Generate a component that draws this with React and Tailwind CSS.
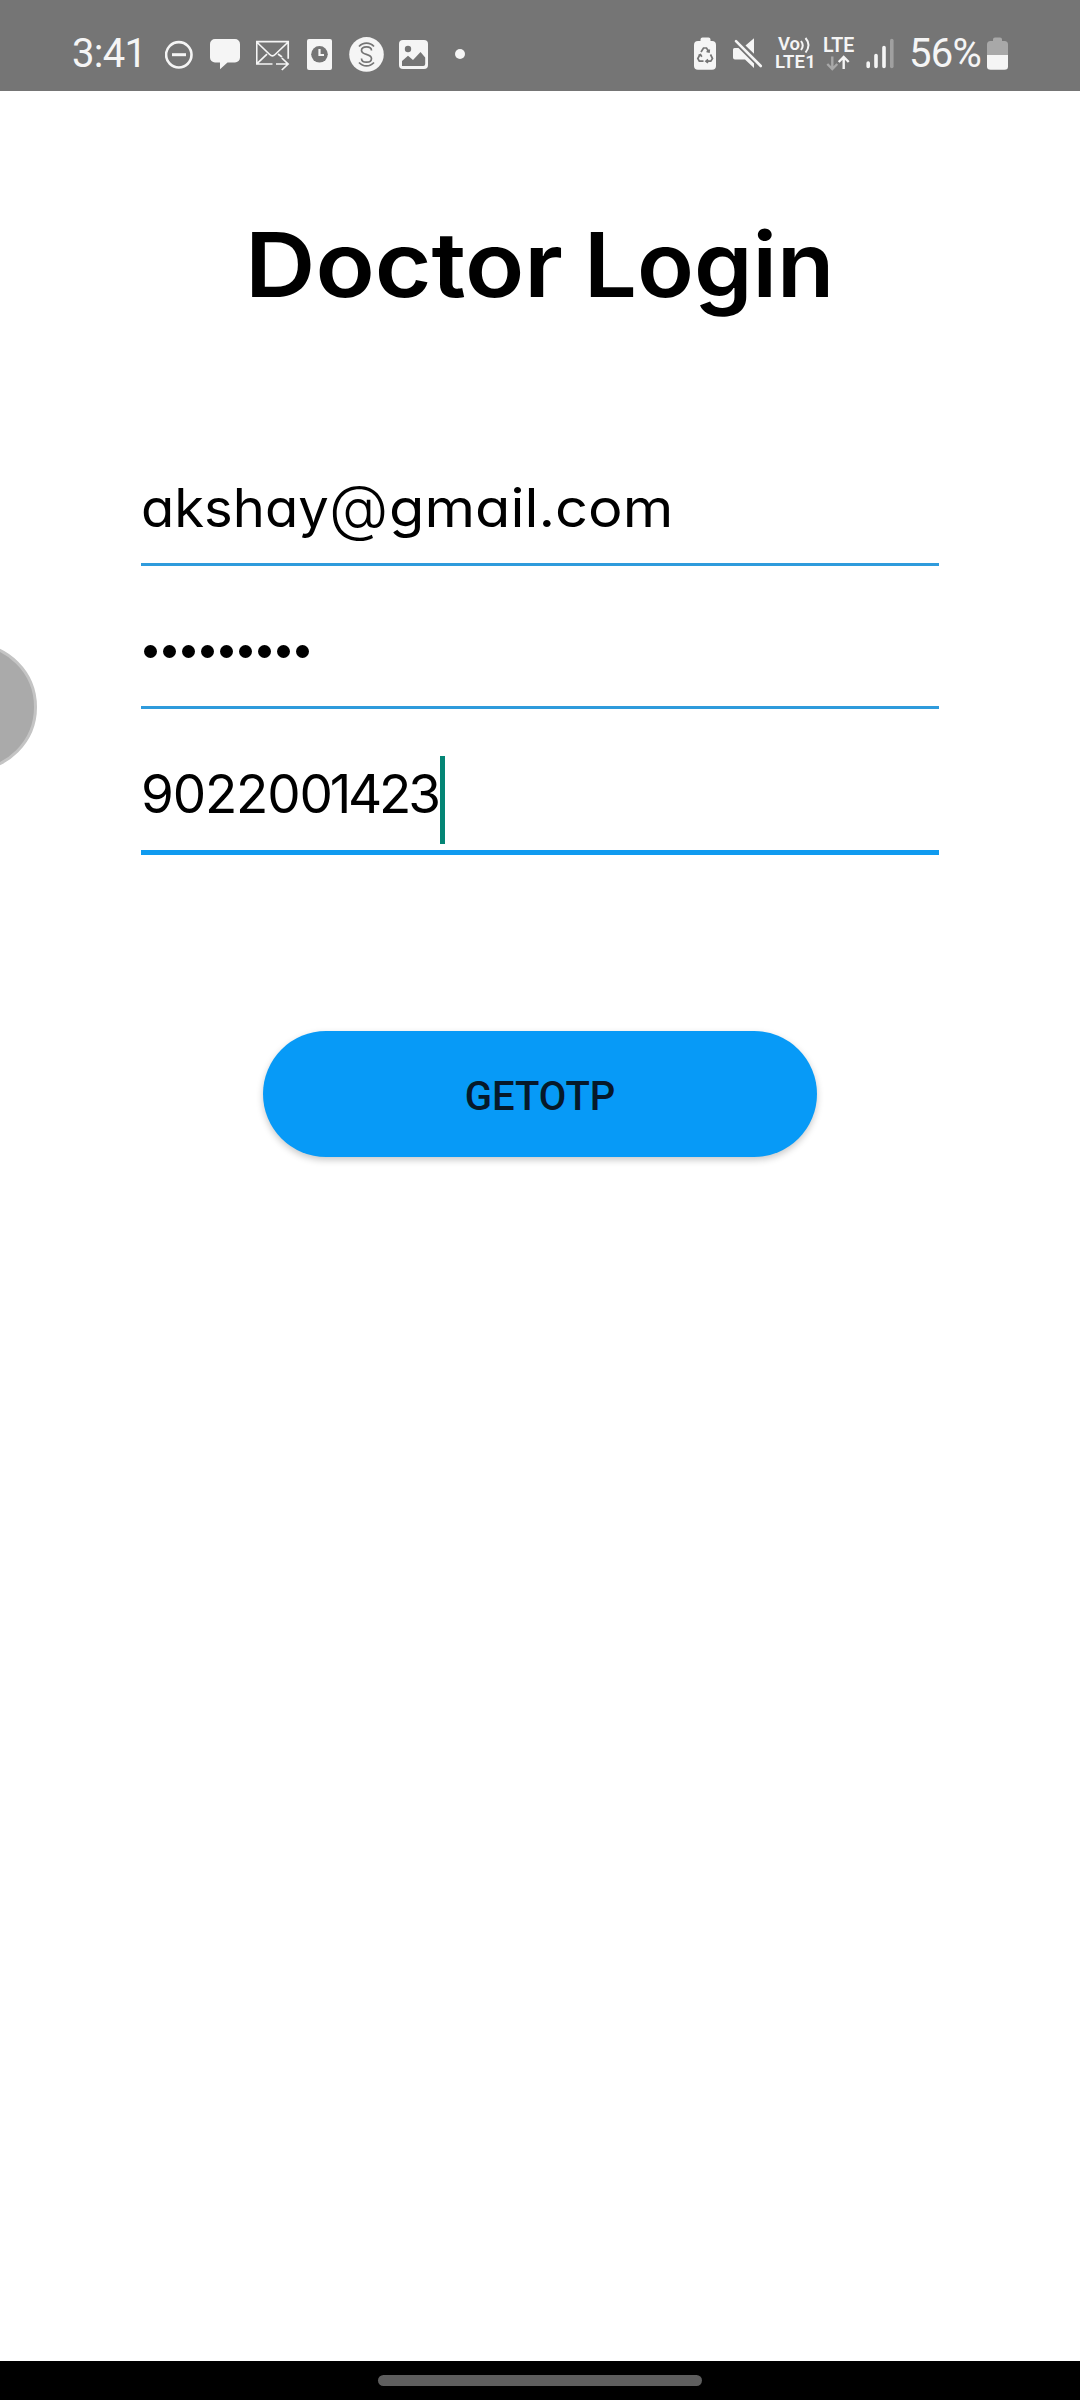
function Icon({ box, className, children }) {
  return (
    <svg viewBox={box} className={`h-9 shrink-0 ${className}`} fill="none" stroke="none">
      {children}
    </svg>
  );
}

function StatusBar() {
  return (
    <header className="flex h-[91px] shrink-0 items-start bg-[#757575] pt-9 font-['Roboto',sans-serif] text-[#f5f5f5]">
      <span className="ml-[72px] w-[93px] text-[40px] leading-9 whitespace-nowrap tracking-[-0.7px]">3:41</span>
      <Icon box="165 36 28 36" className="w-7">
        <circle cx="178.8" cy="54.8" r="12.7" stroke="#f5f5f5" strokeWidth="2.6" />
        <path d="M172 54.7h14" stroke="#f5f5f5" strokeWidth="3" />
      </Icon>
      <Icon box="210 36 30 36" className="ml-[17px] w-[30px]">
        <path d="M215 39h20a5 5 0 0 1 5 5v13.500a5 5 0 0 1-5 5h-7.500l-7.500 6.700v-6.700h-5a5 5 0 0 1-5-5V44a5 5 0 0 1 5-5z" fill="#f5f5f5" />
      </Icon>
      <Icon box="256 36 34 36" className="ml-4 w-[34px]">
        <path d="M272.500 64H256.700V41.700h31.500v17M256.700 42l13 12.500q2.700 2.600 5.400 0L288.200 42M257 63.700l10-9.500M276 64h12.500M281.800 58l6.300 6-6.300 6M278 54l4 3" stroke="#f5f5f5" strokeWidth="1.7" />
      </Icon>
      <Icon box="307 36 25 36" className="ml-[17px] w-[25px]">
        <rect x="307" y="39" width="25" height="31" rx="2" fill="#f5f5f5" />
        <circle cx="319.500" cy="54.300" r="8.300" fill="#757575" />
        <path d="M319.500 49v6h4.500" stroke="#f5f5f5" strokeWidth="2.200" />
      </Icon>
      <Icon box="349 36 35 36" className="ml-[17px] w-[35px]">
        <circle cx="366.500" cy="54.400" r="17.300" fill="#f5f5f5" />
        <path
          d="M371.500 50.500c0-2.300-2-3.700-5-3.700s-5 1.500-5 3.700c0 5 10 2.700 10 8 0 2.300-2 3.700-5 3.700s-5-1.400-5-3.700M359 46.500c4-4.500 11-4.500 15 0M359 62.500c4 4.500 11 4.500 15 0"
          stroke="#757575"
          strokeWidth="1.700"
        />
      </Icon>
      <Icon box="399 36 29 36" className="ml-[15px] w-[29px]">
        <rect x="399" y="40" width="29" height="29" rx="4" fill="#f5f5f5" />
        <circle cx="408" cy="49" r="3.200" fill="#757575" />
        <path d="M402 66v-5l6-5.300 5 4.300 7.500-8 4.700 5.500V64q0 2-2 2z" fill="#757575" />
      </Icon>
      <Icon box="455 36 10 36" className="ml-[27px] w-2.5">
        <circle cx="460" cy="54" r="5" fill="#f5f5f5" />
      </Icon>

      <Icon box="694 36 22 36" className="ml-[229px] w-[22px]">
        <path d="M700.500 41v-1.500q0-2 2-2h6q2 0 2 2V41h1.500q4 0 4 4v21q0 3.700-4 3.700h-14q-4 0-4-3.700V45q0-4 4-4z" fill="#f5f5f5" />
        <path d="M701 52l2.500-4h3l2.300 3.700M710.500 54.500l2 4-1.700 2.700h-4M703.500 61.200h-4.200l-1.500-2.700 2.200-4M708 59.500l-2 1.700 2 1.700M706.500 51.500l2.500.5.300-2.500M698.500 55.500l2-1 1.300 2.200" stroke="#757575" strokeWidth="1.700" />
      </Icon>
      <Icon box="733 36 30 36" className="ml-[17px] w-[30px]">
        <path d="M733 49.500q0-1.500 1.500-1.500h4L754 63.500V68l-9-8.500H735q-2 0-2-2zM745.500 45.500l8.500-7.300v15.600z" fill="#f5f5f5" />
        <path d="M736 41.200L760.800 66" stroke="#f5f5f5" strokeWidth="2.600" strokeLinecap="round" />
      </Icon>
      <div className="ml-[12px] flex w-[48px] flex-col text-[18.500px] leading-[17px] font-semibold">
        <span className="flex h-[18px] pl-[3px]">
          Vo
          <svg viewBox="0 0 12 17" className="h-[17px] w-3" fill="none" stroke="#f5f5f5" strokeWidth="2">
            <path d="M1 5q3.500 4.500 0 9M5.500 2q6 7 0 14.500" />
          </svg>
        </span>
        <span className="tracking-[0.2px]">LTE1</span>
      </div>
      <div className="flex w-[43px] flex-col text-[19.500px] leading-[19px] font-semibold">
        <span className="h-[18px]">LTE</span>
        <svg viewBox="823 54 30 17" className="h-[17px] w-[30px]" fill="none" strokeWidth="2.400">
          <path d="M832.300 56.500V69M827.300 64l5 5 5-5" stroke="#a8a8a8" />
          <path d="M843.700 69V57M838.700 62l5-5 5 5" stroke="#f5f5f5" />
        </svg>
      </div>
      <Icon box="866 36 28 36" className="w-7">
        <g strokeWidth="3.600" strokeLinecap="round" stroke="#f5f5f5">
          <path d="M868.200 63v3.500M876 55.500v11M884 47.500v19" />
          <path d="M891.800 40.500v26" stroke="#a0a0a0" />
        </g>
      </Icon>
      <span className="ml-[15px] w-[78px] text-[40px] leading-9 whitespace-nowrap tracking-[-0.7px]">56%</span>
      <Icon box="987 36 21 36" className="w-[21px]">
        <path d="M993 41v-1.500q0-2 2-2h5q2 0 2 2V41h2.500q3.500 0 3.500 3.500V55h-21V44.500q0-3.500 3.500-3.500z" fill="#a8a8a8" />
        <path d="M987 55h21v11.500q0 3.200-3.500 3.200h-14q-3.500 0-3.500-3.200z" fill="#f5f5f5" />
      </Icon>
    </header>
  );
}

export default function App() {
  return (
    <div className="relative flex h-[2400px] w-[1080px] flex-col overflow-hidden bg-white">
      <StatusBar />
      <main className="flex flex-1 flex-col font-['Inter',sans-serif] text-black [font-feature-settings:'cv11']">
        <h1 className="mt-[119px] ml-[245px] flex h-[110px] text-[90px] leading-[110px] font-semibold whitespace-nowrap">
          <span className="w-[339px]">
            <span className="inline-block origin-left scale-x-[1.083]">Doctor</span>
          </span>
          <span className="inline-block origin-left scale-x-[1.04]">Login</span>
        </h1>
        <form className="mx-[141px] mt-[127px] flex flex-col text-[53px] leading-[80px]">
          <div className="flex h-[119px] items-start border-b-[3px] border-[#2f9bdc] pt-[21px] whitespace-nowrap">
            <span className="w-[188px]">
              <span className="inline-block origin-left scale-x-[1.025]">akshay</span>
            </span>
            <span className="w-[60px] text-[61px] leading-[78px] font-light">@</span>
            <span className="inline-block origin-left scale-x-[1.09]">gmail.com</span>
          </div>
          <div className="flex h-[143px] items-center gap-[6px] border-b-[3px] border-[#2f9bdc] pt-[31px] pl-[3px]">
            {Array.from({ length: 9 }, (_, i) => (
              <span key={i} className="size-[13px] rounded-full bg-black" />
            ))}
          </div>
          <div className="flex h-[146px] items-start border-b-[5px] border-[#109bf0] pt-[47px] whitespace-nowrap">
            <span className="h-[88px] w-[299px] leading-[76px]">
              <span className="tracking-[-1.2px]">90220</span>
              <span className="tracking-[-3.2px]">0142</span>
              <span>3</span>
            </span>
            <span className="h-[88px] w-[5px] bg-[#048575]" />
          </div>
        </form>
        <button className="mt-[176px] flex h-[126px] w-[554px] items-center justify-center self-center rounded-full bg-[#079af7] pt-[5px] font-['Roboto',sans-serif] text-[40px] leading-[47px] font-medium text-[#06192a] shadow-[0_3px_7px_rgba(0,0,0,0.22)]">
          GETOTP
        </button>
      </main>
      <div className="absolute top-[643px] left-[-91px] size-32 rounded-full border-[3px] border-[#c4c4c4] bg-[#aaaaaa]" />
      <footer className="flex h-[39px] shrink-0 justify-center bg-black pt-3.5">
        <div className="h-[11px] w-[324px] rounded-full bg-[#5e5e5e]" />
      </footer>
    </div>
  );
}
